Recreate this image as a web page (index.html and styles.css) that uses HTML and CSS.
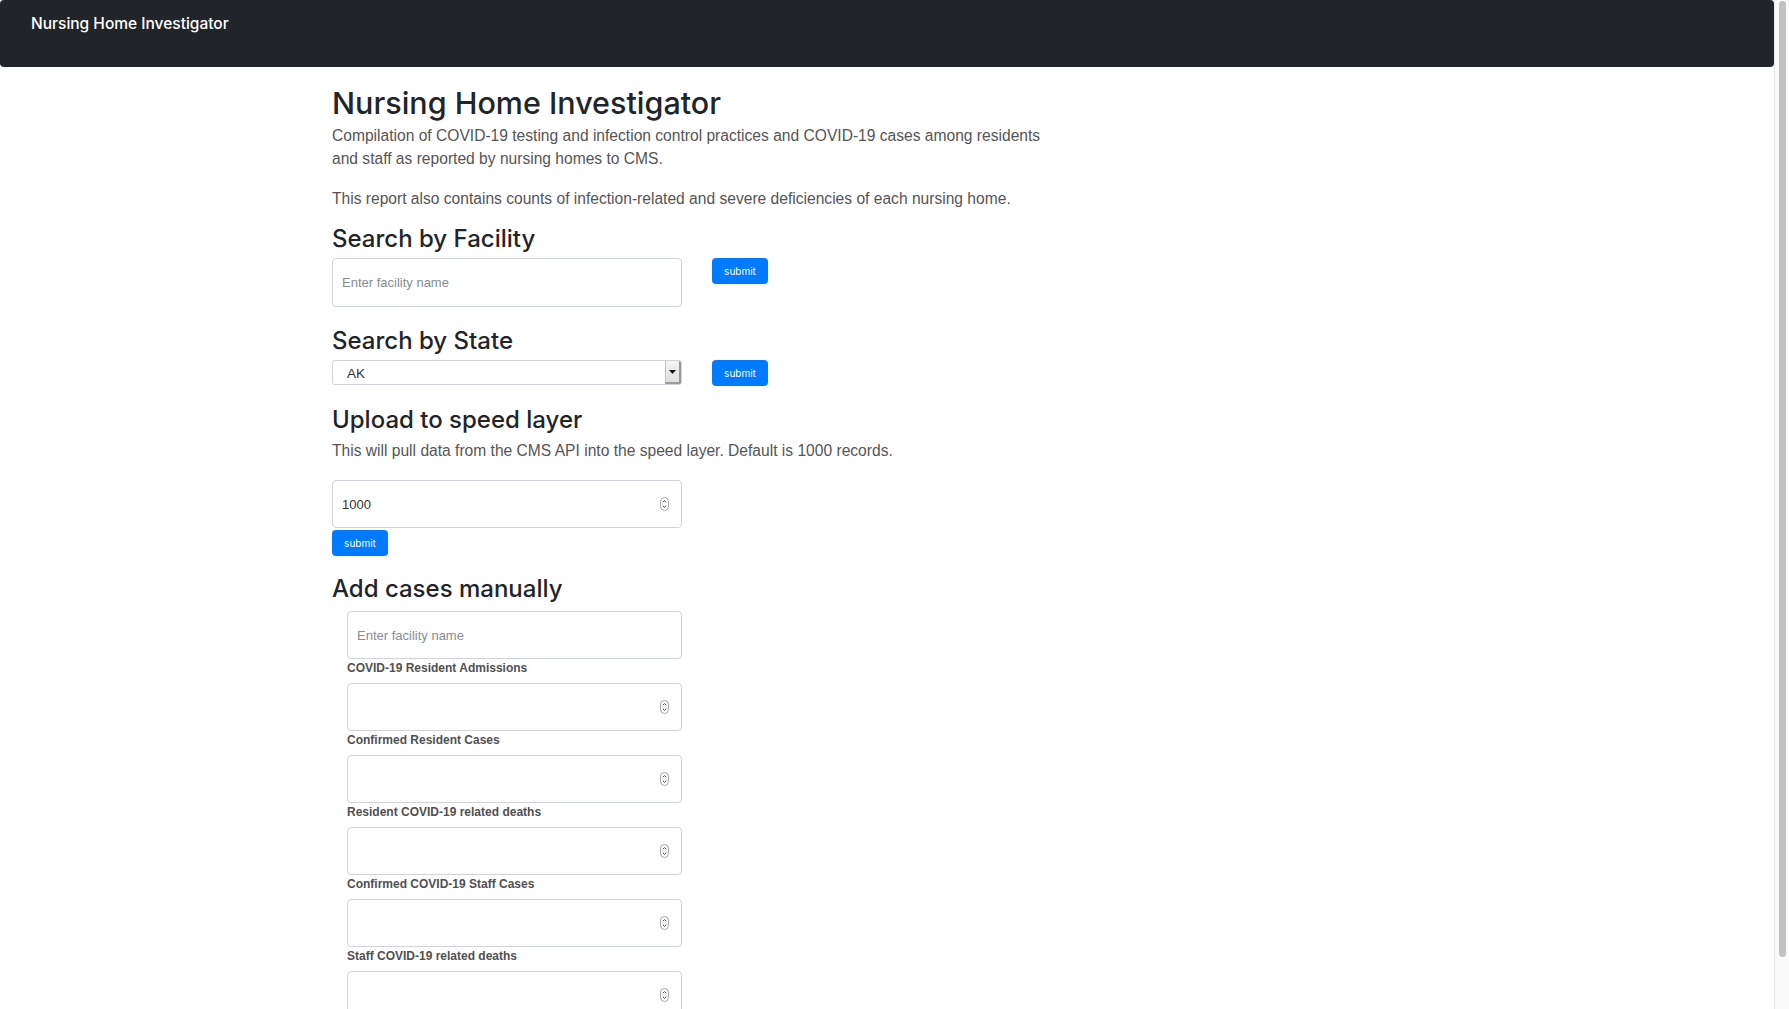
FILE: index.html
```html
<!DOCTYPE html>
<html lang="en">
<head>
<meta charset="utf-8">
<title>Nursing Home Investigator</title>
<link rel="stylesheet" href="styles.css">
</head>
<body>
<nav class="navbar">
  <span class="brand">Nursing Home Investigator</span>
</nav>
<main class="container">
  <h1 class="title">Nursing Home Investigator</h1>
  <p class="intro">Compilation of COVID-19 testing and infection control practices and COVID-19 cases among residents and staff as reported by nursing homes to CMS.</p>
  <p class="intro intro-last">This report also contains counts of infection-related and severe deficiencies of each nursing home.</p>

  <h3 class="section">Search by Facility</h3>
  <div class="form-row">
    <input class="text-field tall" type="text" placeholder="Enter facility name">
    <button class="btn" type="button">submit</button>
  </div>

  <h3 class="section">Search by State</h3>
  <div class="form-row">
    <div class="select-field">
      <select class="select">
        <option>AK</option>
        <option>AL</option>
        <option>AR</option>
      </select>
      <span class="select-arrow"><svg width="7" height="4" viewBox="0 0 7 4"><path d="M0 0h7L3.5 4z" fill="#111"/></svg></span>
    </div>
    <button class="btn" type="button">submit</button>
  </div>

  <h3 class="section">Upload to speed layer</h3>
  <p class="upload-note">This will pull data from the CMS API into the speed layer. Default is 1000 records.</p>
  <div class="stack">
    <div class="num-field">
      <input class="num-input" type="number" value="1000">
      <svg class="spinner" width="9" height="14" viewBox="0 0 9 14"><rect x="0.5" y="0.5" width="8" height="13" rx="4" fill="#fff" stroke="#a8a8a8"/><path d="M2.8 5.2L4.5 3.6 6.2 5.2M2.8 8.8L4.5 10.4 6.2 8.8" fill="none" stroke="#444" stroke-width="1"/></svg>
    </div>
    <button class="btn" type="button">submit</button>
  </div>

  <h3 class="section section-add">Add cases manually</h3>
  <div class="manual">
    <input class="text-field" type="text" placeholder="Enter facility name">
    <label class="field-label">COVID-19 Resident Admissions</label>
    <div class="num-field">
      <input class="num-input" type="number">
      <svg class="spinner" width="9" height="14" viewBox="0 0 9 14"><rect x="0.5" y="0.5" width="8" height="13" rx="4" fill="#fff" stroke="#a8a8a8"/><path d="M2.8 5.2L4.5 3.6 6.2 5.2M2.8 8.8L4.5 10.4 6.2 8.8" fill="none" stroke="#444" stroke-width="1"/></svg>
    </div>
    <label class="field-label">Confirmed Resident Cases</label>
    <div class="num-field">
      <input class="num-input" type="number">
      <svg class="spinner" width="9" height="14" viewBox="0 0 9 14"><rect x="0.5" y="0.5" width="8" height="13" rx="4" fill="#fff" stroke="#a8a8a8"/><path d="M2.8 5.2L4.5 3.6 6.2 5.2M2.8 8.8L4.5 10.4 6.2 8.8" fill="none" stroke="#444" stroke-width="1"/></svg>
    </div>
    <label class="field-label">Resident COVID-19 related deaths</label>
    <div class="num-field">
      <input class="num-input" type="number">
      <svg class="spinner" width="9" height="14" viewBox="0 0 9 14"><rect x="0.5" y="0.5" width="8" height="13" rx="4" fill="#fff" stroke="#a8a8a8"/><path d="M2.8 5.2L4.5 3.6 6.2 5.2M2.8 8.8L4.5 10.4 6.2 8.8" fill="none" stroke="#444" stroke-width="1"/></svg>
    </div>
    <label class="field-label">Confirmed COVID-19 Staff Cases</label>
    <div class="num-field">
      <input class="num-input" type="number">
      <svg class="spinner" width="9" height="14" viewBox="0 0 9 14"><rect x="0.5" y="0.5" width="8" height="13" rx="4" fill="#fff" stroke="#a8a8a8"/><path d="M2.8 5.2L4.5 3.6 6.2 5.2M2.8 8.8L4.5 10.4 6.2 8.8" fill="none" stroke="#444" stroke-width="1"/></svg>
    </div>
    <label class="field-label">Staff COVID-19 related deaths</label>
    <div class="num-field">
      <input class="num-input" type="number">
      <svg class="spinner" width="9" height="14" viewBox="0 0 9 14"><rect x="0.5" y="0.5" width="8" height="13" rx="4" fill="#fff" stroke="#a8a8a8"/><path d="M2.8 5.2L4.5 3.6 6.2 5.2M2.8 8.8L4.5 10.4 6.2 8.8" fill="none" stroke="#444" stroke-width="1"/></svg>
    </div>
    <button class="btn" type="button">submit</button>
  </div>
</main>
<div class="scrollbar" aria-hidden="true"><div class="scrollbar-thumb"></div></div>
</body>
</html>
```

FILE: styles.css
```css
body {
  margin: 0;
  padding-right: 15px;
  font-family: "Liberation Sans", Arial, Helvetica, sans-serif;
  font-size: 16px;
  color: #212529;
  background: #fff;
}

.scrollbar {
  position: fixed;
  top: 0;
  right: 0;
  bottom: 0;
  width: 15px;
  box-sizing: border-box;
  padding: 1px 3px 52px 4px;
  background: #fafafa;
  border-left: 1px solid #e6e6e6;
}

.scrollbar-thumb {
  height: 100%;
  background: #c2c2c2;
  border-radius: 4px;
}

.navbar {
  box-sizing: border-box;
  height: 67px;
  padding: 14px 31px 0;
  background: #212529;
  border-radius: 4px;
}

.brand {
  display: block;
  font-family: "Inter", "Noto Sans", sans-serif;
  font-weight: 500;
  font-size: 15.5px;
  line-height: 20px;
  color: #fff;
}

.container {
  width: 1110px;
  margin: 0 auto;
  padding-top: 17px;
  padding-bottom: 16px;
}

.title {
  margin: 0 0 2px;
  font-family: "Inter", "Noto Sans", sans-serif;
  font-weight: 500;
  font-size: 30.5px;
  line-height: 38px;
  color: #212529;
}

.intro {
  max-width: 730px;
  margin: 0 0 17px;
  font-size: 15.6px;
  line-height: 23px;
  color: #555;
}

.intro-last {
  margin-bottom: 14px;
}

.section {
  margin: 0 0 4px;
  font-family: "Inter", "Noto Sans", sans-serif;
  font-weight: 500;
  font-size: 24px;
  line-height: 30px;
  color: #212529;
}

.section-add {
  margin-bottom: 7px;
}

.form-row {
  display: flex;
  align-items: flex-start;
  gap: 30px;
  margin-bottom: 19px;
}

.text-field {
  box-sizing: border-box;
  display: block;
  width: 335px;
  height: 48px;
  margin: 0;
  padding: 0 9px;
  border: 1px solid #ced4da;
  border-radius: 4px;
  font-family: "Liberation Sans", Arial, sans-serif;
  font-size: 13px;
  color: #333;
  background: #fff;
  outline: none;
}

.text-field.tall {
  width: 350px;
  height: 49px;
}

.text-field::placeholder {
  color: #868c92;
}

.select-field {
  box-sizing: border-box;
  display: flex;
  align-items: stretch;
  width: 350px;
  height: 25px;
  border: 1px solid #ced4da;
  border-radius: 3px;
  background: #fff;
  overflow: hidden;
}

.select {
  flex: 1;
  min-width: 0;
  -webkit-appearance: none;
  appearance: none;
  border: none;
  background: transparent;
  padding: 2px 0 0 14px;
  font-family: "Liberation Sans", Arial, sans-serif;
  font-size: 13.5px;
  color: #333;
  outline: none;
}

.select-arrow {
  display: flex;
  align-items: center;
  justify-content: center;
  width: 13px;
  background: linear-gradient(#f4f4f4, #e0e0e0);
  border-left: 1px solid #c4c4c4;
  border-right: 2px solid #9a9a9a;
  border-bottom: 2px solid #9a9a9a;
}

.btn {
  box-sizing: border-box;
  width: 56px;
  height: 26px;
  padding: 0;
  border: none;
  border-radius: 4px;
  background: #007bff;
  color: #fff;
  font-family: "Inter", "Noto Sans", sans-serif;
  font-size: 10px;
  line-height: 26px;
  cursor: pointer;
}

.upload-note {
  margin: 3px 0 18px;
  font-size: 15.6px;
  line-height: 23px;
  color: #555;
}

.stack {
  display: flex;
  flex-direction: column;
  align-items: flex-start;
  gap: 2px;
  margin-bottom: 18px;
}

.stack .num-field {
  width: 350px;
}

.num-field {
  box-sizing: border-box;
  display: flex;
  align-items: center;
  width: 335px;
  height: 48px;
  border: 1px solid #ced4da;
  border-radius: 4px;
  background: #fff;
  padding: 0 12px 0 9px;
}

.num-input {
  flex: 1;
  min-width: 0;
  border: none;
  padding: 0;
  font-family: "Liberation Sans", Arial, sans-serif;
  font-size: 13px;
  color: #333;
  background: transparent;
  outline: none;
  -moz-appearance: textfield;
}

.num-input::-webkit-inner-spin-button,
.num-input::-webkit-outer-spin-button {
  -webkit-appearance: none;
  margin: 0;
}

.spinner {
  flex: none;
}

.manual {
  display: flex;
  flex-direction: column;
  align-items: flex-start;
  margin-left: 15px;
}

.field-label {
  display: block;
  margin: 0 0 6px;
  font-family: "Liberation Sans", Arial, sans-serif;
  font-weight: 700;
  font-size: 12px;
  line-height: 18px;
  color: #505050;
}

.manual .btn {
  margin-top: 2px;
}
```
